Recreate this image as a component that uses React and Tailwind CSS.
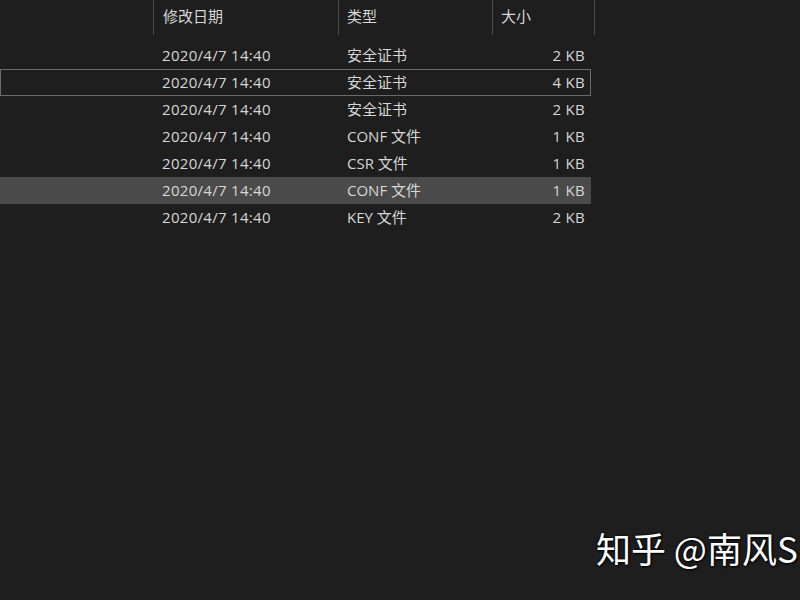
const rows = [
  { date: '2020/4/7 14:40', type: '安全证书', size: '2 KB' },
  { date: '2020/4/7 14:40', type: '安全证书', size: '4 KB', focus: true },
  { date: '2020/4/7 14:40', type: '安全证书', size: '2 KB' },
  { date: '2020/4/7 14:40', type: 'CONF 文件', size: '1 KB' },
  { date: '2020/4/7 14:40', type: 'CSR 文件', size: '1 KB' },
  { date: '2020/4/7 14:40', type: 'CONF 文件', size: '1 KB', selected: true },
  { date: '2020/4/7 14:40', type: 'KEY 文件', size: '2 KB' },
];

export default function App() {
  return (
    <div
      className="relative w-[800px] h-[600px] overflow-hidden bg-[#1e1e1e] text-[#d6d6d6] text-[15px]"
      style={{ fontFamily: '"Open Sans", "Noto Sans CJK SC", sans-serif' }}
    >
      {/* Header */}
      <div className="flex h-[35px]">
        <div className="w-[153px]" />
        <div className="w-[185px] border-l border-[#4d4d4d] pl-[9px] pt-[5px]">修改日期</div>
        <div className="w-[154px] border-l border-[#4d4d4d] pl-[8px] pt-[5px]">类型</div>
        <div className="w-[103px] border-l border-r border-[#4d4d4d] pl-[8px] pt-[5px]">大小</div>
      </div>

      {/* Rows */}
      <div className="pt-[7px] w-[591px]">
        {rows.map((r, i) => (
          <div
            key={i}
            className={
              'flex items-center h-[27px] border ' +
              (r.focus
                ? 'border-[#6a6a6a]'
                : r.selected
                ? 'border-transparent bg-[#4a4a4a]'
                : 'border-transparent')
            }
          >
            <div className="w-[153px]" />
            <div className="w-[185px] pl-[8px] whitespace-nowrap tracking-[0.3px]">{r.date}</div>
            <div className="w-[154px] pl-[8px] whitespace-nowrap">{r.type}</div>
            <div className="flex-1 text-right pr-[5px] whitespace-nowrap tracking-[0.3px]">{r.size}</div>
          </div>
        ))}
      </div>

      {/* watermark */}
      <div
        className="absolute left-[596px] top-[522px] whitespace-nowrap text-[35px] text-white [text-shadow:0_0_3px_#000,1px_1px_2px_#000]"
        style={{ fontFamily: '"Noto Sans CJK SC", sans-serif' }}
      >
        知乎 @南风S
      </div>
    </div>
  );
}
